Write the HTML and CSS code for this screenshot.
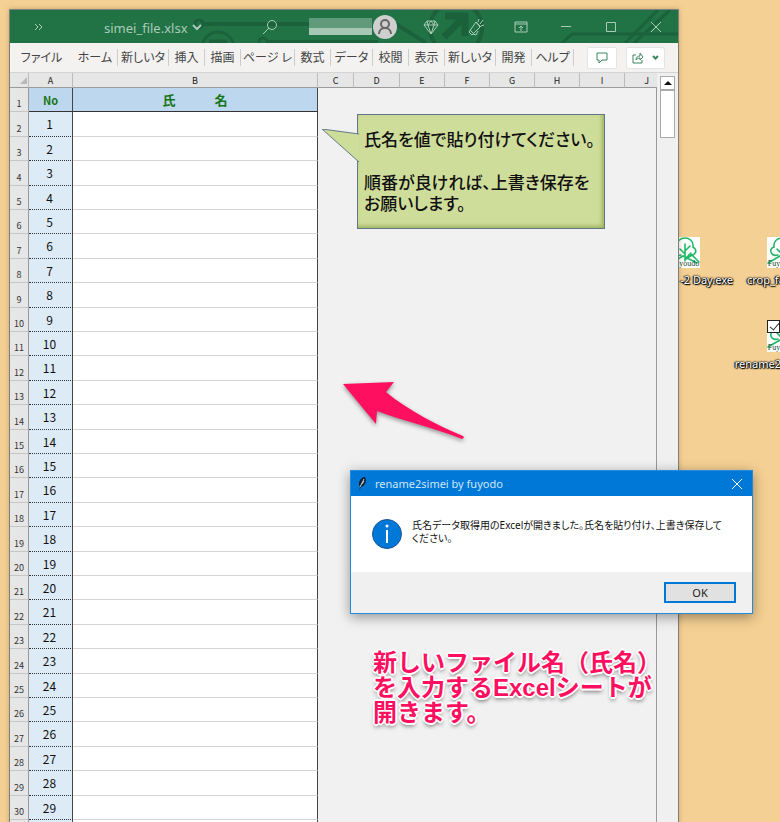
FILE: index.html
```html
<!DOCTYPE html>
<html lang="ja">
<head>
<meta charset="utf-8">
<title>simei_file.xlsx</title>
<link rel="stylesheet" href="styles.css">
</head>
<body>
<svg class="defs" aria-hidden="true">
  <symbol id="tree" viewBox="0 0 30 31">
    <rect width="30" height="31" fill="#fff"/>
    <g fill="none" stroke="#1fb866" stroke-width="1.6" stroke-linecap="round">
      <path d="M11 18c-7 2-10-6-4-8C6 4 11 1 15 1s9 3 8 9c5 3 3 9-4 8"/>
      <path d="M15 7v17M15 17l-5-5M15 14l5-5M15 22l6-6M1 26l12-7 14 7M16 22l6-4 7 7"/>
    </g>
  </symbol>
</svg>
<main class="desktop">
  <div class="shortcut shortcut-day"><svg><use href="#tree"/></svg><small>Fuyoudo</small><span>-2 Day.exe</span></div>
  <div class="shortcut shortcut-crop"><svg><use href="#tree"/></svg><small>Fuyoudo</small><span>crop_face.exe</span></div>
  <div class="shortcut shortcut-rename"><input type="checkbox" checked aria-label="rename2simei"><svg><use href="#tree"/></svg><small>Fuyoudo</small><span>rename2simei.exe</span></div>

  <section class="window">
    <header class="titlebar">
      <svg class="circuit" viewBox="0 0 668 33" preserveAspectRatio="xMinYMin slice" fill="none" stroke="#1b623c" stroke-width="4" aria-hidden="true">
        <circle cx="189" cy="14" r="4" stroke-width="3"/><path d="M193 14h110M258 32h110"/>
        <circle cx="253" cy="32" r="4" stroke-width="3"/>
        <circle cx="208" cy="38" r="16" stroke-width="3"/><path d="M199 32h18" stroke-width="5"/>
        <path d="M386 14l30 19"/>
        <circle cx="446" cy="18" r="26"/><path d="M434 27l19-19M435 6h20v20" stroke-width="7"/>
        <path d="M549 36l13-12h106M615 33l33-33M624 33l36-33" stroke-width="3"/>
      </svg>
      <button class="more" aria-label="More"><svg width="10" height="8" viewBox="0 0 10 8"><path d="M1 1l3 3-3 3M5 1l3 3-3 3"/></svg></button>
      <button class="filename">simei_file.xlsx<svg width="10" height="7" viewBox="0 0 10 7"><path d="M1 1l4 4 4-4" stroke-width="2"/></svg></button>
      <button class="search" aria-label="Search"><svg width="16" height="16" viewBox="0 0 16 16"><circle cx="10" cy="6" r="4.5"/><path d="M7 9l-6 6"/></svg></button>
      <div class="account"></div>
      <button class="avatar" aria-label="Account"><svg width="24" height="24" viewBox="0 0 24 24"><circle cx="12" cy="12" r="12"/><circle class="person" cx="12" cy="9" r="4"/><path class="person" d="M6 19c0-8 12-8 12 0"/></svg></button>
      <div class="tools">
        <button aria-label="Premium"><svg width="16" height="16" viewBox="0 0 16 16"><path d="M4 2h8l3 4-7 9-7-9zM1 6h14M4 2l1 4 3 9 3-9 1-4M5 6l3-4 3 4"/></svg></button>
        <button aria-label="What's new"><svg width="18" height="18" viewBox="0 0 18 18"><path d="M9 4L2 14l3 3 8-8zM3 12l4 4M6 16l3 1 2-4M11 4l1-3M13 6l3-4M14 8l3-1M9 4l5 5"/></svg></button>
        <button aria-label="Ribbon options"><svg width="14" height="12" viewBox="0 0 14 12"><path d="M1 1h12v10H1zM1 3h12M7 10V5M5 7l2-2 2 2"/></svg></button>
        <button aria-label="Minimize"><svg width="12" height="12" viewBox="0 0 12 12"><path d="M1 5.500h10"/></svg></button>
        <button aria-label="Maximize"><svg width="12" height="12" viewBox="0 0 12 12"><path d="M1.500 1.500h9v9h-9z"/></svg></button>
        <button aria-label="Close"><svg width="12" height="12" viewBox="0 0 12 12"><path d="M1 1l10 10M11 1L1 11"/></svg></button>
      </div>
    </header>

    <nav class="ribbon">
      <button class="tab file">ファイル</button><button class="tab home">ホーム</button><button class="tab wide">新しいタ</button><button class="tab">挿入</button><button class="tab">描画</button><button class="tab page">ページ レ</button><button class="tab">数式</button><button class="tab data">データ</button><button class="tab">校閲</button><button class="tab">表示</button><button class="tab wide">新しいタ</button><button class="tab">開発</button><button class="tab data">ヘルプ</button>
      <div class="actions">
        <button aria-label="Comments"><svg width="12" height="12" viewBox="0 0 12 12"><path d="M1 1h10v7H6l-3 3V8H1z"/></svg></button>
        <button class="share" aria-label="Share"><svg width="12" height="12" viewBox="0 0 12 12"><path d="M4 3H1v8h9V8M4 8c0-3 2-4 4-4V1l3 4-3 3V6C6 6 5 7 4 8z"/></svg><svg width="7" height="5" viewBox="0 0 7 5"><path d="M1 1l2.500 2.500L6 1" stroke-width="2"/></svg></button>
      </div>
    </nav>

    <div class="workbook">
      <table class="sheet">
        <colgroup><col class="c-num"><col class="c-a"><col class="c-b"><col class="c-c"><col class="c-d"><col class="c-e"><col class="c-e"><col class="c-e"><col class="c-e"><col class="c-e"><col></colgroup>
        <thead>
          <tr><th class="corner"><svg width="7" height="7" viewBox="0 0 7 7"><path d="M7 0v7H0z" fill="#b8b8b8"/></svg></th><th>A</th><th>B</th><th>C</th><th>D</th><th>E</th><th>F</th><th>G</th><th>H</th><th>I</th><th class="last">J</th></tr>
          <tr class="fields"><th class="num">1</th><th class="no">No</th><th class="name">氏　　　名</th><td class="empty" colspan="8"></td></tr>
        </thead>
        <tbody id="rows"></tbody>
      </table>
      <div class="scroll"><button aria-label="Scroll up"><svg width="8" height="4" viewBox="0 0 8 4"><path d="M0 4l4-4 4 4z" fill="#111"/></svg></button><div class="thumb"></div></div>
    </div>
  </section>

  <aside class="callout">
    <svg class="tail" width="38" height="34" viewBox="0 0 38 34"><path d="M38 5L1 0l37 33" fill="#cfdd9b" stroke="#62788a"/></svg>
    <p>氏名を値で貼り付けてください。</p><p>順番が良ければ、上書き保存を<br>お願いします。</p>
  </aside>

  <svg class="arrow" width="130" height="66" viewBox="0 0 130 66" aria-hidden="true"><path d="M2 4L53 2l-8 10C68 31 96 45 122 56q2 2-1 3C91 47 62 41 36 31l-1 13z" fill="#ff0f5f"/></svg>

  <section class="dialog" role="dialog" aria-labelledby="dialog-title">
    <header>
      <svg width="10" height="16" viewBox="0 0 10 16"><path d="M2 15l1-4C0 7 4 1 8 1c2 4 0 9-4 10l-2 4z" fill="#16202c"/><path d="M3 11L7 3M5 8l2-3" stroke="#b9d6ed" fill="none"/></svg>
      <h2 id="dialog-title">rename2simei by fuyodo</h2>
      <button aria-label="Close"><svg width="12" height="12" viewBox="0 0 12 12"><path d="M1 1l10 10M11 1L1 11" stroke="#fff" fill="none"/></svg></button>
    </header>
    <div class="message">
      <svg width="30" height="30" viewBox="0 0 30 30"><circle cx="15" cy="15" r="14.500" fill="#0078d7" stroke="#1c568f"/><path d="M15 11v13" stroke="#fff" stroke-width="2"/><circle cx="15" cy="7" r="1.500" fill="#fff"/></svg>
      <p>氏名データ取得用のExcelが開きました。氏名を貼り付け、上書き保存して<br>ください。</p>
    </div>
    <footer><button>OK</button></footer>
  </section>

  <p class="note">新しいファイル名（氏名）<br>を入力するExcelシートが<br>開きます。</p>
</main>
<script src="rows.js"></script>
</body>
</html>
```
FILE: styles.css
```css
* { box-sizing: border-box; }
body {
  margin: 0;
  font-family: "Noto Sans", "Noto Sans CJK JP", sans-serif;
  font-size: 12px;
}
button { border: 0; padding: 0; background: none; font: inherit; color: inherit; }
p, h2 { margin: 0; }
svg { display: block; flex: none; }
.defs { position: absolute; width: 0; height: 0; }
.desktop {
  position: relative;
  height: 100vh;
  overflow: hidden;
  padding: 9px 101px 0 9px;
  background: #f5d094;
}
.window { position: relative; border: 1px solid #808080; border-bottom: 0; background: #f1f1f1; box-shadow: 0 0 5px rgba(80, 60, 20, .3); }

/* Title bar */
.titlebar { position: relative; display: flex; align-items: center; height: 33px; background: #217346; color: #a9cbb7; }
.titlebar > * { position: relative; }
.titlebar .circuit { position: absolute; inset: 0; width: 100%; height: 100%; }
.titlebar button svg { fill: none; stroke: #a9cbb7; }
.more { margin-left: 24px; width: 10px; }
.filename { display: flex; align-items: center; gap: 4px; margin-left: 60px; padding-top: 2px; font-size: 13px; line-height: 18px; width: 100px; white-space: nowrap; }
.search { margin-left: 58px; width: 16px; }
.account { margin-left: 31px; width: 63px; height: 17px; background: linear-gradient(#609a7b 60%, #a6c7b4 60%); }
.avatar { margin-left: 1px; }
.titlebar .avatar circle:first-child { fill: #cfcfcf; stroke: none; }
.titlebar .avatar .person { stroke: #666; stroke-width: 2; }
.tools { flex: 1; display: flex; align-items: center; justify-content: flex-end; }
.tools button { width: 45px; display: flex; align-items: center; justify-content: center; }

/* Ribbon */
.ribbon { display: flex; align-items: center; height: 30px; background: #f3f2f1; border-bottom: 1px solid #d4d4d4; color: #444; font-feature-settings: "palt"; }
.tab { flex: none; width: 36px; height: 17px; line-height: 17px; overflow: hidden; white-space: nowrap; border-right: 1px solid #ccc; }
.tab.file { width: 63px; border: 0; }
.tab.home { width: 45px; }
.tab.wide { width: 51px; }
.tab.page { width: 54px; }
.tab.data { width: 42px; }
.actions { flex: 1; display: flex; justify-content: flex-end; gap: 9px; padding-right: 13px; }
.actions button { display: flex; align-items: center; justify-content: center; width: 30px; height: 22px; background: #fff; border: 1px solid #e4e4e4; border-radius: 2px; }
.actions .share { width: 39px; gap: 8px; }
.actions svg { fill: none; stroke: #3c8660; }

/* Worksheet */
.workbook { display: flex; background: #e6e6e6; }
.sheet { flex: 1; table-layout: fixed; width: 100%; border-spacing: 0; font-family: "Noto Sans CJK JP", sans-serif; }
.sheet th, .sheet td { padding: 0; font-weight: 400; line-height: 14px; }
.c-num { width: 19px; }
.c-a { width: 44px; }
.c-b { width: 245px; }
.c-c { width: 36px; }
.c-d { width: 46px; }
.c-e { width: 45px; }
.sheet thead tr:first-child th { height: 15px; font-size: 9px; line-height: 13px; color: #222; background: #e6e6e6; border-right: 1px solid #bbb; border-bottom: 1px solid #9b9b9b; }
.sheet thead .corner svg { margin-left: 10px; }
.sheet thead tr:first-child .last { text-align: right; padding-right: 8px; border-right: 0; }
.sheet .num { background: #e6e6e6; border-right: 1px solid #999; border-bottom: 1px solid #c6c6c6; color: #333; font-size: 9px; line-height: 10px; vertical-align: bottom; padding-bottom: 2px; }
.fields { height: 24px; }
.sheet .no, .sheet .name { background: #bdd7ee; color: #167516; font-weight: 700; border-right: 1px solid #444; border-bottom: 1px solid #333; }
.sheet .no { font-size: 11px; }
.sheet .name { font-size: 13px; }
.sheet .empty { background: #f1f1f1; border-right: 1px solid #999; }
tbody tr { height: 24px; }
tbody tr:nth-child(5n + 1), tbody tr:nth-child(5n + 3) { height: 25px; }
.sheet .index { text-align: center; background: #ddebf7; border-right: 1px solid #444; border-bottom: 1px dotted #333; font-size: 12px; color: #111; padding-right: 2px; }
.sheet .entry { background: #fff; border-right: 1px solid #444; border-bottom: 1px solid #d4d4d4; }
.scroll { flex: none; width: 21px; padding: 3px 3px 0; background: #f0f0f0; }
.scroll button { display: flex; align-items: center; justify-content: center; width: 100%; height: 14px; background: #fff; border: 1px solid #aaa; }
.thumb { height: 48px; background: #fff; border: 1px solid #aaa; }

/* Speech callout */
.callout { position: absolute; left: 357px; top: 114px; width: 248px; height: 115px; padding: 14px 0 0 6px; background: #cfdd9b; border: 1px solid #62788a; box-shadow: inset -2px -2px 4px #9cb35b; font-size: 17px; font-weight: 500; line-height: 21px; white-space: nowrap; font-feature-settings: "palt"; color: #111; }
.callout p + p { margin-top: 22px; }
.tail { position: absolute; left: -37px; top: 14px; }
.arrow { position: absolute; left: 341px; top: 380px; filter: drop-shadow(0 2px 2px rgba(0, 0, 0, .4)); }

/* Message dialog */
.dialog { position: absolute; left: 350px; top: 470px; width: 403px; border: 1px solid #2589dc; background: #fff; box-shadow: 0 3px 12px rgba(0, 0, 0, .4); }
.dialog header { display: flex; align-items: center; gap: 8px; height: 25px; padding: 0 9px 0 6px; background: #0078d7; color: #cfe6f9; }
.dialog h2 { flex: 1; font-size: 11px; font-weight: 400; }
.message { display: flex; gap: 10px; height: 76px; padding: 23px 0 0 21px; }
.message p { font-size: 10px; line-height: 13px; white-space: nowrap; font-feature-settings: "palt"; color: #111; }
.dialog footer { display: flex; justify-content: flex-end; padding: 10px 16px; background: #f0f0f0; }
.dialog footer button { width: 72px; height: 21px; background: #e1e1e1; border: 2px solid #0078d7; font-size: 11px; line-height: 16px; color: #222; }

.note { position: absolute; left: 373px; top: 650px; font: 700 24px/25px "Liberation Sans", "Noto Sans CJK JP", sans-serif; white-space: nowrap; color: #ff0f5f; text-shadow: 2px 0 #fff, -2px 0 #fff, 0 2px #fff, 0 -2px #fff, 1px 1px #fff, -1px 1px #fff, 1px -1px #fff, -1px -1px #fff, 0 3px 4px rgba(0, 0, 0, .6); }

/* Desktop shortcuts */
.shortcut { position: absolute; display: flex; flex-direction: column; align-items: center; width: 96px; font-size: 11px; line-height: 16px; white-space: nowrap; color: #fff; text-shadow: 1px 1px 1px #000, 0 0 2px #000, 0 0 2px #000, -1px 0 1px #000; }
.shortcut svg { width: 30px; height: 31px; }
.shortcut small { height: 8px; margin: -8px 0 4px; font: 8px/8px "Liberation Serif", serif; color: #174a35; text-shadow: none; }
.shortcut input { position: absolute; left: 33px; top: -1px; width: 13px; height: 13px; margin: 0; appearance: none; background: #fff; border: 1px solid #222; }
.shortcut input::after { content: ""; position: absolute; left: 4px; top: 0; width: 4px; height: 8px; border: solid #333; border-width: 0 1px 1px 0; transform: rotate(40deg); }
.shortcut-day { left: 637px; top: 237px; padding-left: 0; }
.shortcut-day span { align-self: flex-end; }
.shortcut-crop { left: 734px; top: 237px; }
.shortcut-rename { left: 734px; top: 321px; }
```
FILE: rows.js
```js
const body = document.getElementById("rows");
for (let i = 1; i <= 30; i++) {
  const row = body.insertRow();
  const num = document.createElement("th");
  num.className = "num";
  num.textContent = i + 1;
  row.append(num);
  const index = row.insertCell();
  index.className = "index";
  index.textContent = i;
  row.insertCell().className = "entry";
  const empty = row.insertCell();
  empty.className = "empty";
  empty.colSpan = 8;
}
```
